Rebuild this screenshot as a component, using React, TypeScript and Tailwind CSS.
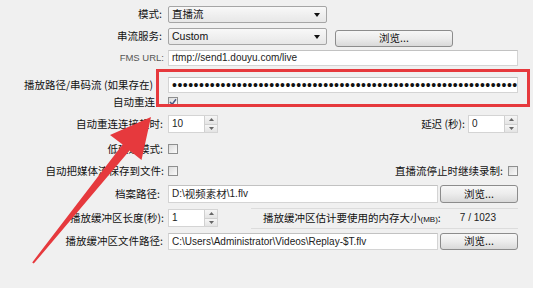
import React from "react";

const cjk = '"Noto Sans CJK SC", "Noto Sans", sans-serif';
const latin = '"Liberation Sans", "Noto Sans CJK SC", sans-serif';

const Label = ({ text, pr = "pr-[2px]", small }: { text: string; pr?: string; small?: boolean }) => (
  <div
    className={`w-[164px] shrink-0 text-right whitespace-nowrap leading-none ${pr} ${
      small ? "text-[9.5px] text-[#555]" : "text-[10.5px] text-[#111]"
    }`}
    style={{ fontFamily: small ? latin : cjk }}
  >
    {text}
  </div>
);

const Combo = ({ value }: { value: string }) => (
  <div className="ml-[4px] flex h-[17px] w-[159px] items-center rounded-[2px] border border-[#a5a5a5] bg-linear-to-b from-[#f8f8f8] to-[#e7e7e7] pl-[3px] pr-[6px] text-[10.5px] leading-none text-[#111]">
    <span style={{ fontFamily: latin }}>{value}</span>
    <svg className="ml-auto" width="6" height="4" viewBox="0 0 6 4">
      <path d="M0 0 H6 L3 4 Z" fill="#111" />
    </svg>
  </div>
);

const Button = ({ w, extra = "" }: { w: string; extra?: string }) => (
  <div
    className={`flex h-[17px] ${w} ${extra} items-center justify-center rounded-[3px] border border-[#8c8c8c] bg-linear-to-b from-[#f7f7f7] via-[#ececec] to-[#d9d9d9] text-[10.5px] leading-none text-[#111]`}
    style={{ fontFamily: cjk }}
  >
    浏览...
  </div>
);

const Input = ({ w, h = "h-[16px]", children }: { w: string; h?: string; children?: React.ReactNode }) => (
  <div
    className={`ml-[4px] flex ${h} ${w} items-center overflow-hidden whitespace-nowrap border border-[#d4d4d4] border-t-[#c2c2c2] bg-white pl-[3px] text-[10px] leading-none text-[#222]`}
    style={{ fontFamily: latin }}
  >
    {children}
  </div>
);

const Spin = ({ value, ml = "ml-[4px]" }: { value: string; ml?: string }) => (
  <div className={`${ml} flex h-[18px] w-[50px] border border-[#d4d4d4] bg-white`}>
    <div className="flex flex-1 items-center pl-[3px] text-[10px] leading-none text-[#222]" style={{ fontFamily: latin }}>
      {value}
    </div>
    <div className="flex w-[13px] flex-col border-l border-[#d0d0d0]">
      <div className="flex flex-1 items-center justify-center border-b border-[#d0d0d0] bg-linear-to-b from-[#f6f6f6] to-[#e4e4e4]">
        <svg width="5" height="3" viewBox="0 0 5 3">
          <path d="M0 3 L2.5 0 L5 3 Z" fill="#666" />
        </svg>
      </div>
      <div className="flex flex-1 items-center justify-center bg-linear-to-b from-[#f6f6f6] to-[#e4e4e4]">
        <svg width="5" height="3" viewBox="0 0 5 3">
          <path d="M0 0 L5 0 L2.5 3 Z" fill="#666" />
        </svg>
      </div>
    </div>
  </div>
);

const Check = ({ checked, ml = "ml-[4px]" }: { checked?: boolean; ml?: string }) => (
  <div className={`${ml} flex h-[10px] w-[10px] items-center justify-center border border-[#8e8f8f] bg-linear-to-br from-[#dcdcdc] to-[#fbfbfb]`}>
    {checked && (
      <svg width="8" height="8" viewBox="0 0 8 8">
        <path d="M1 4 L3.2 6.3 L7 1.3" fill="none" stroke="#4c5a82" strokeWidth="1.5" />
      </svg>
    )}
  </div>
);

export default function App() {
  const dots = "•".repeat(64);
  return (
    <div className="relative h-[288px] w-[533px] overflow-hidden bg-[#f0f0f0]" style={{ fontFamily: cjk }}>
      <div className="flex flex-col pr-[15px]">
        <div className="mt-[6px] flex h-[17px] items-center">
          <Label text="模式:" />
          <Combo value="直播流" />
        </div>

        <div className="mt-[5px] flex h-[19px] items-start">
          <div className="flex h-[17px] items-center">
            <Label text="串流服务:" />
            <Combo value="Custom" />
          </div>
          <Button w="w-[118px]" extra="ml-[8px] mt-[2px]" />
        </div>

        <div className="mt-[3px] flex h-[16px] items-center">
          <Label text="FMS URL:" pr="pr-0" small />
          <Input w="w-[350px]">rtmp://send1.douyu.com/live</Input>
        </div>

        <div className="mt-[11px] flex h-[16px] items-center">
          <Label text="播放路径/串码流 (如果存在)" pr="pr-[11px]" />
          <Input w="w-[350px]">
            <span className="text-[14px] tracking-[0.5px] text-[#111]">{dots}</span>
          </Input>
        </div>

        <div className="mt-[4px] flex h-[10px] items-center">
          <Label text="自动重连" pr="pr-[9px]" />
          <Check checked />
        </div>

        <div className="mt-[8px] flex h-[18px] items-center">
          <Label text="自动重连连接超时:" pr="pr-[1px]" />
          <Spin value="10" />
          <div className="ml-auto mr-[3px] text-[10.5px] leading-none text-[#111]">延迟 (秒):</div>
          <Spin value="0" ml="ml-0" />
        </div>

        <div className="mt-[11px] flex h-[10px] items-center">
          <Label text="低延迟模式:" pr="pr-[1px]" />
          <Check />
        </div>

        <div className="mt-[12px] flex h-[10px] items-center">
          <Label text="自动把媒体流保存到文件:" pr="pr-0" />
          <Check />
          <div className="ml-auto mr-[5px] text-[10.5px] leading-none text-[#111]">直播流停止时继续录制:</div>
          <Check ml="ml-0" />
        </div>

        <div className="mt-[9px] flex h-[18px] items-center">
          <Label text="档案路径:" pr="pr-[4px]" />
          <Input w="w-[270px]" h="h-[18px]">
            D:\<span style={{ fontFamily: cjk }} className="text-[10.5px]">视频素材</span>\1.flv
          </Input>
          <Button w="w-[78px]" extra="ml-auto h-[18px]" />
        </div>

        <div className="mt-[6px] flex h-[18px] items-center">
          <Label text="播放缓冲区长度(秒):" pr="pr-0" />
          <Spin value="1" />
          <div className="ml-[33px] flex h-[21px] flex-1 items-center border-y border-[#dcdcdc]">
            <div className="ml-[12px] text-[10.5px] leading-none text-[#111]">
              播放缓冲区估计要使用的内存大小<span className="text-[8px]" style={{ fontFamily: latin }}>(MB)</span>:
            </div>
            <div className="ml-auto mr-[22px] text-[10px] leading-none text-[#222]" style={{ fontFamily: latin }}>
              7 / 1023
            </div>
          </div>
        </div>

        <div className="mt-[6px] flex h-[17px] items-center">
          <Label text="播放缓冲区文件路径:" pr="pr-[1px]" />
          <Input w="w-[270px]" h="h-[17px]">C:\Users\Administrator\Videos\Replay-$T.flv</Input>
          <Button w="w-[78px]" extra="ml-auto" />
        </div>
      </div>

      <div className="pointer-events-none absolute left-[156px] top-[69px] h-[38px] w-[374px] border-[3px] border-[#e6393d]" />

      <svg className="pointer-events-none absolute left-0 top-0" width="533" height="288" viewBox="0 0 533 288">
        <polygon
          points="151,117 141.5,160 129.6,150.6 33.8,263.6 32.2,262.4 122.6,144.6 110,135"
          fill="#e6393d"
        />
      </svg>
    </div>
  );
}
